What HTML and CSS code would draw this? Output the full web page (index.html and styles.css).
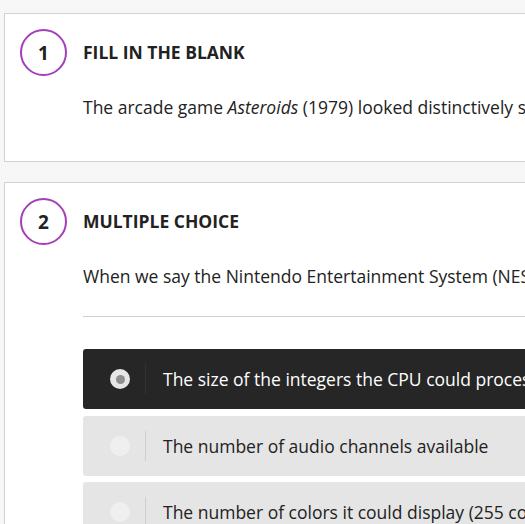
FILE: index.html
```html
<!DOCTYPE html>
<html>
<head>
<meta charset="utf-8">
<link rel="stylesheet" href="styles.css">
</head>
<body>
<div class="page">
  <section class="card">
    <div class="num">1</div>
    <div class="content">
      <h2 class="title">FILL IN THE BLANK</h2>
      <p class="question">The arcade game <em>Asteroids</em> (1979) looked distinctively sharp and vector-drawn on screen.</p>
    </div>
  </section>
  <section class="card">
    <div class="num">2</div>
    <div class="content">
      <h2 class="title">MULTIPLE CHOICE</h2>
      <p class="question">When we say the Nintendo Entertainment System (NES) was an 8-bit console, what does that refer to?</p>
      <hr class="rule">
      <div class="options">
        <div class="option selected"><span class="radio"><span class="dot"></span></span><span class="sep"></span><span class="label">The size of the integers the CPU could process at once</span></div>
        <div class="option"><span class="radio"></span><span class="sep"></span><span class="label">The number of audio channels available</span></div>
        <div class="option"><span class="radio"></span><span class="sep"></span><span class="label">The number of colors it could display (255 colors)</span></div>
      </div>
    </div>
  </section>
</div>
</body>
</html>
```

FILE: styles.css
```css
html, body {
  margin: 0;
  padding: 0;
  background: #f7f7f7;
  overflow: hidden;
}
body {
  font-family: "Open Sans", "Liberation Sans", sans-serif;
  color: #222;
}
.page {
  padding: 13px 0 0 4px;
  width: 700px;
}
.card {
  display: flex;
  gap: 16px;
  background: #fff;
  border: 1px solid #d2d2d2;
  padding: 15px 15px 40px 15px;
  margin-bottom: 20px;
}
.num {
  flex: 0 0 auto;
  width: 43px;
  height: 43px;
  border: 2px solid #a43fb8;
  border-radius: 50%;
  display: flex;
  align-items: center;
  justify-content: center;
  font-weight: 700;
  font-size: 19px;
  color: #222;
}
.content {
  flex: 1;
  min-width: 0;
}
.title {
  margin: 0;
  height: 47px;
  line-height: 47px;
  font-size: 17.5px;
  font-weight: 700;
  white-space: nowrap;
}
.question {
  margin: 17px 0 0 0;
  font-size: 17.5px;
  line-height: 28px;
  white-space: nowrap;
}
.rule {
  border: 0;
  border-top: 1px solid #cfcfcf;
  margin: 26px 0 0 0;
}
.options {
  margin-top: 32px;
  display: flex;
  flex-direction: column;
  gap: 6.5px;
}
.option {
  display: flex;
  align-items: center;
  height: 60px;
  background: #e5e5e5;
  border-radius: 3px;
  white-space: nowrap;
}
.option.selected {
  background: #262626;
  color: #fff;
}
.radio {
  flex: 0 0 auto;
  width: 20px;
  height: 20px;
  border-radius: 50%;
  background: #efefef;
  margin-left: 27px;
  display: flex;
  align-items: center;
  justify-content: center;
}
.selected .radio {
  background: #e6e6e6;
}
.dot {
  width: 9px;
  height: 9px;
  border-radius: 50%;
  background: #8f8f8f;
}
.sep {
  flex: 0 0 auto;
  width: 1px;
  height: 30px;
  background: #cfcfcf;
  margin: 0 17px 0 15px;
}
.selected .sep {
  background: #333;
}
.label {
  font-size: 17.5px;
}
```
